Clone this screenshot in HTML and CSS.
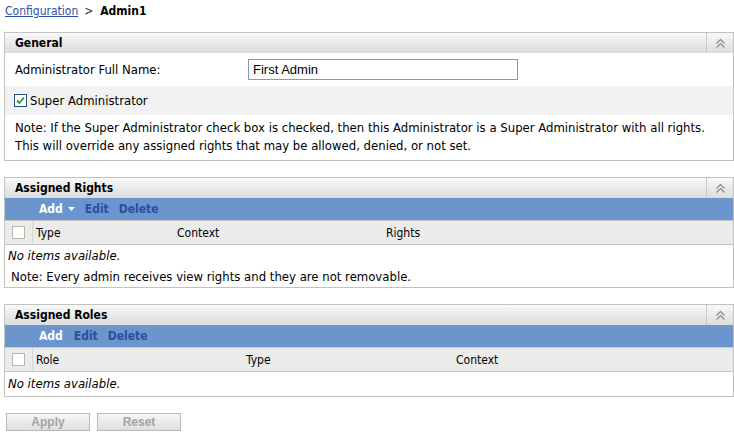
FILE: index.html
```html
<!DOCTYPE html>
<html>
<head>
<meta charset="utf-8">
<link rel="stylesheet" href="styles.css">
</head>
<body>
<div class="crumbs"><a href="#">Configuration</a><span class="sep">&gt;</span><b>Admin1</b></div>

<div class="panel">
  <div class="phead"><span class="ptitle">General</span><span class="pcol"><svg width="9" height="9" viewBox="0 0 9 9"><path d="M0.5 4.5 L4.5 0.5 L8.5 4.5 M0.5 8.5 L4.5 4.5 L8.5 8.5" fill="none" stroke="#8a8a8a" stroke-width="1.2"/></svg></span></div>
  <div class="frow"><label class="flabel">Administrator Full Name:</label><input class="finput" type="text" value="First Admin"></div>
  <div class="frow alt"><span class="cb checked"><svg width="11" height="11" viewBox="0 0 11 11"><path d="M2 5.5 L4.5 8 L9 2.5" fill="none" stroke="#2e9a2e" stroke-width="1.8"/></svg></span><span>Super Administrator</span></div>
  <p class="note">Note: If the Super Administrator check box is checked, then this Administrator is a Super Administrator with all rights. This will override any assigned rights that may be allowed, denied, or not set.</p>
</div>

<div class="panel">
  <div class="phead"><span class="ptitle">Assigned Rights</span><span class="pcol"><svg width="9" height="9" viewBox="0 0 9 9"><path d="M0.5 4.5 L4.5 0.5 L8.5 4.5 M0.5 8.5 L4.5 4.5 L8.5 8.5" fill="none" stroke="#8a8a8a" stroke-width="1.2"/></svg></span></div>
  <div class="tbar"><span class="tadd">Add<svg class="caret" width="7" height="4" viewBox="0 0 7 4"><path d="M0 0 H7 L3.5 4 Z" fill="#fff"/></svg></span><span class="tlink">Edit</span><span class="tlink">Delete</span></div>
  <div class="thead">
    <span class="tcb"><span class="cb"></span></span>
    <span class="th w1">Type</span><span class="th w2">Context</span><span class="th">Rights</span>
  </div>
  <div class="empty">No items available.</div>
  <div class="tnote">Note: Every admin receives view rights and they are not removable.</div>
</div>

<div class="panel">
  <div class="phead"><span class="ptitle">Assigned Roles</span><span class="pcol"><svg width="9" height="9" viewBox="0 0 9 9"><path d="M0.5 4.5 L4.5 0.5 L8.5 4.5 M0.5 8.5 L4.5 4.5 L8.5 8.5" fill="none" stroke="#8a8a8a" stroke-width="1.2"/></svg></span></div>
  <div class="tbar"><span class="tadd plain">Add</span><span class="tlink">Edit</span><span class="tlink">Delete</span></div>
  <div class="thead">
    <span class="tcb"><span class="cb"></span></span>
    <span class="th w3">Role</span><span class="th w3">Type</span><span class="th">Context</span>
  </div>
  <div class="empty tall">No items available.</div>
</div>

<div class="buttons"><button class="btn">Apply</button><button class="btn">Reset</button></div>
</body>
</html>
```

FILE: styles.css
```css
body {
  margin: 0;
  font-family: "DejaVu Sans Condensed", "DejaVu Sans", sans-serif;
  font-size: 13px;
  color: #000;
  background: #fff;
}
.crumbs {
  height: 24px;
  padding: 3px 0 0 5px;
  box-sizing: border-box;
  line-height: 16px;
  font-size: 12px;
}
.crumbs a { color: #2d4fa5; text-decoration: underline; }
.crumbs .sep { margin: 0 7px 0 6px; color: #333; }
.crumbs b { font-weight: bold; }

.panel {
  border: 1px solid #c2c2c2;
  margin: 8px 0 16px 4px;
  width: 728px;
}
.phead {
  display: flex;
  height: 20px;
  background: linear-gradient(#f9f9f9, #dcdcdc);
}
.ptitle {
  flex: 1;
  padding-left: 10px;
  font-weight: bold;
  font-size: 12px;
  line-height: 21px;
}
.pcol {
  width: 26px;
  border-left: 1px solid #c8c8c8;
  display: flex;
  align-items: center;
  justify-content: center;
}
.frow {
  display: flex;
  align-items: center;
  height: 33px;
  padding-left: 10px;
}
.frow.alt { background: #f2f2f2; height: 29px; padding-left: 9px; }
.flabel { width: 233px; }
.finput {
  width: 270px;
  height: 21px;
  box-sizing: border-box;
  border: 1px solid #7f9db9;
  padding: 1px 4px;
  font-family: "Liberation Sans", Arial, sans-serif;
  font-size: 13px;
  margin: 0;
}
.cb {
  width: 13px;
  height: 13px;
  box-sizing: border-box;
  border: 1px solid #b5b5ac;
  background: #fff;
  display: inline-flex;
  align-items: center;
  justify-content: center;
}
.cb.checked { border-color: #1c5180; margin-right: 3px; }
.note {
  margin: 0;
  padding: 4px 4px 5px 10px;
  line-height: 18px;
}
.tbar {
  display: flex;
  align-items: center;
  height: 22px;
  background: #6a96cd;
  padding-left: 34px;
  font-weight: bold;
  font-size: 12px;
}
.tadd { color: #fff; display: inline-flex; align-items: center; margin-right: 10px; }
.tadd.plain { margin-right: 11px; }
.caret { margin-left: 5px; }
.tlink { color: #2b4f9c; margin-right: 10px; }
.thead {
  display: flex;
  align-items: center;
  height: 25px;
  background: #ebebea;
  border-top: 1px solid #c6c6c6;
  border-bottom: 1px solid #c6c6c6;
  box-sizing: border-box;
  font-size: 12px;
}
.tcb {
  width: 27px;
  height: 100%;
  border-right: 1px solid #d6d6d6;
  display: flex;
  align-items: center;
  justify-content: center;
  margin-right: 3px;
}
.w1 { width: 141px; }
.w2 { width: 209px; }
.w3 { width: 210px; }
.empty {
  font-style: italic;
  height: 21px;
  line-height: 21px;
  padding-left: 3px;
}
.empty.tall { height: 24px; line-height: 24px; }
.tnote {
  height: 21px;
  line-height: 21px;
  padding-left: 6px;
}
.buttons {
  display: flex;
  gap: 7px;
  padding: 0 0 0 6px;
}
.btn {
  width: 84px;
  height: 18px;
  border: 1px solid #b8b8b8;
  background: linear-gradient(#f6f6f6, #dedede);
  color: #a3a3a3;
  font-family: "Liberation Sans", Arial, sans-serif;
  font-weight: bold;
  font-size: 12px;
  padding: 0;
  margin: 0;
}
```
